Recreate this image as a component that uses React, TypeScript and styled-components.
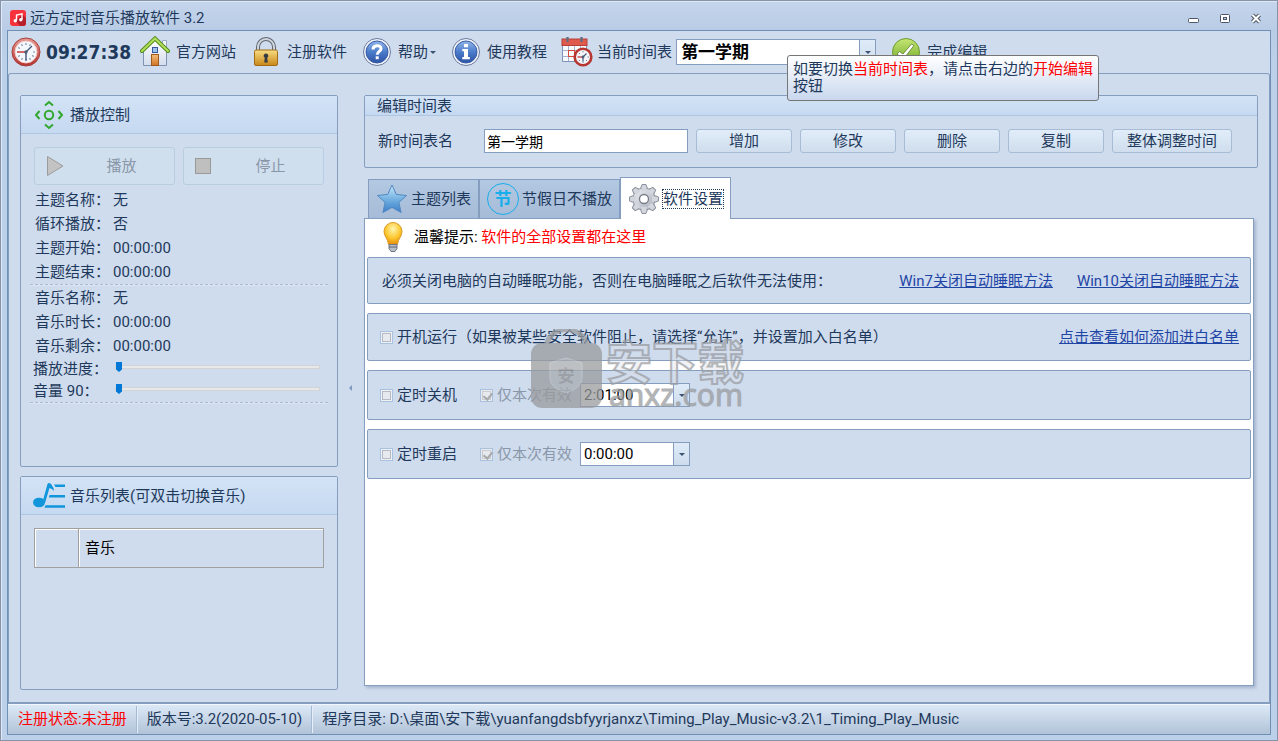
import React from "react";
import styled, { createGlobalStyle, css } from "styled-components";

const GlobalStyle = createGlobalStyle`
  * { box-sizing: border-box; }
  body {
    margin: 0;
    background: #bdd0e9;
    color: #1e395b;
    font: 15px/18px Roboto, "Noto Sans CJK SC", sans-serif;
  }
  button, input, select { font: inherit; color: inherit; margin: 0; padding: 0; border-radius: 0; }
`;

const line = "#859ebf";

/* ---------- window frame ---------- */

const Window = styled.div`
  min-height: 100vh;
  display: flex;
  flex-direction: column;
  padding: 1px 6px 5px;
  border: 1px solid #8793a8;
  background: linear-gradient(#c4d5ec, #b9cce5 30px, #bdd0ea 60px);
  box-shadow: inset 1px 1px 0 #dfe9f6;
`;

const TitleBar = styled.header`
  display: flex;
  align-items: center;
  gap: 4px;
  height: 28px;
  padding: 3px 8px 0 3px;
  white-space: nowrap;
`;

const Title = styled.h1`
  flex: 1;
  margin: 0;
  font-size: 15px;
  font-weight: 400;
`;

const WindowButtons = styled.div`
  display: flex;
  gap: 17px;
`;

const WindowButton = styled.button`
  display: flex;
  width: 14px;
  height: 14px;
  border: 0;
  background: none;
`;

const Body = styled.div`
  flex: 1;
  display: flex;
  flex-direction: column;
  border: 1px solid #6f8fb4;
  background: #cfdcee;
`;

/* ---------- tool bar ---------- */

const ToolBar = styled.nav`
  display: flex;
  align-items: center;
  gap: 14px;
  height: 42px;
  padding-left: 3px;
  white-space: nowrap;
`;

const Clock = styled.time`
  display: flex;
  align-items: center;
  gap: 5px;
  margin-right: -6px;
  font: bold 19px/24px "DejaVu Sans Condensed", "DejaVu Sans", sans-serif;
`;

const ToolButton = styled.button`
  display: flex;
  align-items: center;
  gap: 5px;
  border: 0;
  background: none;
`;

const ToolField = styled.div`
  display: flex;
  align-items: center;
  gap: 4px;
`;

const MenuWord = styled.span`
  display: flex;
  align-items: center;
  gap: 2px;
`;

const Caret = styled.span`
  flex: none;
  border: 3px solid transparent;
  border-top: 3px solid #3d5273;
  border-bottom: 0;
`;

const Combo = styled.div<{ $width: number; $height: number }>`
  display: flex;
  width: ${(p) => p.$width}px;
  height: ${(p) => p.$height}px;
  border: 1px solid ${line};
  background: #fff;
`;

const ComboSelect = styled.select`
  flex: 1;
  min-width: 0;
  padding-left: 4px;
  border: 0;
  outline: 0;
  appearance: none;
  background: none;
  color: #000;
  font-size: 17px;
  font-weight: 700;
`;

const ComboInput = styled.input`
  flex: 1;
  min-width: 0;
  padding-left: 3px;
  border: 0;
  outline: 0;
  background: none;
  color: #000;
`;

const ComboButton = styled.button`
  display: flex;
  align-items: center;
  justify-content: center;
  width: 16px;
  border: 0;
  border-left: 1px solid ${line};
  background: linear-gradient(#dfebf8, #cddcec);
`;

/* ---------- client area ---------- */

const Client = styled.main`
  flex: 1;
  display: flex;
  padding: 21px 11px 12px 11px;
  border: 1px solid ${line};
  border-bottom-width: 2px;
  border-radius: 3px 3px 0 0;
`;

const SideColumn = styled.div`
  flex: none;
  display: flex;
  flex-direction: column;
  gap: 9px;
  width: 318px;
`;

const MainColumn = styled.div`
  flex: 1;
  min-width: 0;
  display: flex;
  flex-direction: column;
`;

const Splitter = styled.div`
  flex: none;
  display: flex;
  align-items: center;
  justify-content: center;
  width: 26px;
  padding: 0 2px 10px 0;
`;

const SplitterArrow = styled.span`
  border: 3px solid transparent;
  border-right: 3px solid #7f98bd;
  border-left: 0;
`;

const Group = styled.section<{ $grow?: boolean }>`
  ${(p) => p.$grow && css`flex: 1;`}
  border: 1px solid ${line};
  border-radius: 2px;
`;

const GroupHead = styled.h2<{ $tall?: boolean }>`
  display: flex;
  align-items: center;
  gap: 5px;
  height: ${(p) => (p.$tall ? 38 : 20)}px;
  margin: 0;
  padding-left: 12px;
  border-bottom: 1px solid #aec6e1;
  background: linear-gradient(#d3e3f6, #c5d9f1);
  font-size: 15px;
  font-weight: 400;
`;

const PlayerBody = styled.div`
  padding: 13px 9px 62px;
`;

const PlayerButtons = styled.div`
  display: flex;
  gap: 8px;
  padding: 0 4px 3px;
`;

const PlayerButton = styled.button`
  flex: 1;
  display: flex;
  align-items: center;
  height: 38px;
  padding: 0 17px 0 9px;
  border: 1px solid #b9cde0;
  border-radius: 3px;
  background: #d0dfee;
  color: #8a97a8;
`;

const PlayerButtonText = styled.span`
  flex: 1;
  padding-left: 18px;
`;

const Facts = styled.dl`
  margin: 0;
  padding-left: 5px;
`;

const Fact = styled.div`
  display: flex;
  height: 24px;
  line-height: 24px;
`;

const FactName = styled.dt`
  width: 78px;
`;

const FactValue = styled.dd`
  margin: 0;
`;

const Rule = styled.hr`
  height: 2px;
  margin: 0;
  border: 0;
  border-top: 1px dashed #a9bad2;
  background: #dbe5f2;
`;

const SliderRow = styled.div`
  display: flex;
  align-items: flex-start;
  height: 22px;
  padding: 0 8px 0 3px;
  line-height: 22px;
`;

const SliderLabel = styled.label`
  width: 82px;
`;

const Slider = styled.input`
  flex: 1;
  min-width: 0;
  height: 12px;
  margin-top: 3px;
  appearance: none;
  background: none;

  &::-webkit-slider-runnable-track {
    height: 4px;
    border: 1px solid #d3d3d5;
    background: #e7e9ea;
  }
  &::-webkit-slider-thumb {
    appearance: none;
    width: 6px;
    height: 10px;
    margin-top: -4px;
    background: #0078d7;
    clip-path: polygon(0 0, 100% 0, 100% 75%, 50% 100%, 0 75%);
  }
`;

const MusicTable = styled.table`
  width: calc(100% - 26px);
  margin: 13px;
  border: 1px solid #a0a0a0;
  border-spacing: 0;
  table-layout: fixed;
`;

const MusicHead = styled.th<{ $width?: number }>`
  width: ${(p) => (p.$width ? `${p.$width}px` : "auto")};
  height: 38px;
  padding: 0 6px;
  box-shadow: inset 1px 1px 0 #fff;
  color: #000;
  font-weight: 400;
  text-align: left;
  & + & { border-left: 1px solid #a0a0a0; }
`;

/* ---------- schedule editor ---------- */

const EditorRow = styled.form`
  display: flex;
  align-items: center;
  gap: 8px;
  padding: 13px 13px 14px;
`;

const EditorLabel = styled.label`
  width: 98px;
`;

const NameInput = styled.input`
  width: 204px;
  height: 24px;
  padding-left: 2px;
  border: 1px solid ${line};
  outline: 0;
  background: #fff;
  color: #000;
  font-size: 14px;
`;

const Button = styled.button<{ $wide?: boolean }>`
  width: ${(p) => (p.$wide ? 120 : 96)}px;
  height: 24px;
  border: 1px solid #a9bcd6;
  border-radius: 3px;
  background: linear-gradient(#e1edf9, #cfdded);
`;

/* ---------- tabs ---------- */

const Tabs = styled.div`
  position: relative;
  z-index: 1;
  display: flex;
  align-items: flex-end;
  margin: 9px 0 -1px;
  padding-left: 4px;
`;

const Tab = styled.button<{ $active?: boolean }>`
  display: flex;
  align-items: center;
  gap: 3px;
  height: 40px;
  padding: 0 7px;
  border: 1px solid ${line};
  background: linear-gradient(#b3c8e1, #a5bbd7);
  ${(p) =>
    p.$active &&
    css`
      height: 42px;
      border-bottom: 0;
      background: #fff;
    `}
`;

const TabText = styled.span<{ $focus?: boolean }>`
  ${(p) => p.$focus && css`outline: 1px dotted #1e395b;`}
`;

const TabPage = styled.div`
  position: relative;
  flex: 1;
  margin: 0 4px 4px 0;
  padding: 0 2px;
  border: 1px solid ${line};
  background: #fff;
  box-shadow: 2px 2px 3px rgba(90, 110, 145, 0.35);
`;

const Tip = styled.p`
  display: flex;
  align-items: center;
  gap: 5px;
  height: 38px;
  margin: 0;
  padding: 0 0 2px 10px;
  color: #000;
`;

const Red = styled.span`
  color: #f00;
`;

const Settings = styled.div`
  display: flex;
  flex-direction: column;
  gap: 9px;
`;

const Setting = styled.div<{ $height?: number; $indent?: number }>`
  display: flex;
  align-items: center;
  height: ${(p) => p.$height ?? 50}px;
  padding: 0 11px 0 ${(p) => p.$indent ?? 12}px;
  border: 1px solid ${line};
  border-radius: 2px;
  background: #cfdcee;
`;

const Links = styled.div`
  display: flex;
  gap: 24px;
  margin-left: auto;
`;

const Link = styled.a`
  color: #1f45a5;
`;

const Check = styled.label<{ $dim?: boolean }>`
  display: flex;
  align-items: center;
  gap: 4px;
  margin-right: ${(p) => (p.$dim ? 8 : 23)}px;
  color: ${(p) => (p.$dim ? "#8a97a8" : "inherit")};
`;

const CheckBox = styled.input.attrs({ type: "checkbox" })`
  width: 13px;
  height: 13px;
  appearance: none;
  border: 1px solid #a9c0de;
  background: #e6e9ed;
  box-shadow: inset 0 0 0 1px #f0f1f2, inset 0 0 0 2px #b4bac3;

  &:checked {
    box-shadow: inset 0 0 0 1px #e8eaec, inset 0 0 0 2px #c9cdd2;
  }
  &:checked::after {
    content: "";
    display: block;
    width: 4px;
    height: 7px;
    margin: 1px 0 0 4px;
    border: solid #a7a9ab;
    border-width: 0 2px 2px 0;
    transform: rotate(40deg);
  }
`;

/* ---------- status bar ---------- */

const StatusBar = styled.footer`
  display: flex;
  align-items: center;
  height: 30px;
  border-top: 1px solid #f2f7fd;
  background: linear-gradient(#dce8f6, #b1c3d8);
  white-space: nowrap;
`;

const StatusItem = styled.span<{ $alert?: boolean }>`
  padding: 0 9px 0 10px;
  line-height: 27px;
  color: ${(p) => (p.$alert ? "#f00" : "inherit")};
  & + & {
    border-left: 1px solid #a4b9d2;
    box-shadow: inset 1px 0 0 #e5eef9;
  }
`;

/* ---------- overlays ---------- */

const Tooltip = styled.div`
  position: absolute;
  z-index: 5;
  top: 55px;
  left: 787px;
  width: 312px;
  padding: 5px 0 5px 5px;
  border: 1px solid #767676;
  border-radius: 3px;
  background: linear-gradient(#fff, #c9d7ee);
  line-height: 17px;
`;

const Watermark = styled.div`
  position: absolute;
  z-index: 4;
  top: 110px;
  left: 166px;
  display: flex;
  gap: 4px;
  color: #999b9e;
  opacity: 0.75;
  pointer-events: none;
`;

const MarkWords = styled.div`
  display: flex;
  flex-direction: column;
  padding-top: 5px;
`;

const MarkName = styled.span`
  font: 700 46px/50px "Noto Sans CJK SC", sans-serif;
  color: rgba(215, 222, 232, 0.5);
  -webkit-text-stroke: 2px #9b9ea3;
`;

const MarkSite = styled.span`
  padding-left: 3px;
  margin-top: -7px;
  font: 400 30px/36px "Noto Sans", sans-serif;
  -webkit-text-stroke: 1px currentColor;
`;

/* ---------- icons ---------- */

const AppIcon = () => (
  <svg width="16" height="16" viewBox="0 0 16 16">
    <rect width="16" height="16" rx="3" fill="#f8323c" />
    <path d="M6 11l4 5h3a3 3 0 0 0 3-3V8l-4-4z" fill="#b81f2a" />
    <path d="M6.500 10.500V5l5.500-1.200v5.700" fill="none" stroke="#fff" strokeWidth="1.400" />
    <circle cx="5.300" cy="10.800" r="1.700" fill="#fff" />
    <circle cx="10.800" cy="9.700" r="1.700" fill="#fff" />
  </svg>
);

const ClockIcon = () => (
  <svg width="30" height="32" viewBox="0 0 30 32">
    <defs>
      <linearGradient id="rim" x1="0" y1="0" x2="0" y2="1">
        <stop offset="0" stopColor="#e79a93" />
        <stop offset="1" stopColor="#b43230" />
      </linearGradient>
    </defs>
    <circle cx="15" cy="16" r="14" fill="url(#rim)" stroke="#a8403e" />
    <circle cx="15" cy="16" r="11" fill="#f4f7fb" stroke="#f3c9c4" />
    <g stroke="#7d8ea8" strokeWidth="1.200">
      <path d="M15 7v2M15 23v2M24 16h-2M19.500 8.200l-1 1.700M10.500 8.200l1 1.700M22.800 20.500l-1.700-1M7.200 20.500l1.700-1M10.500 23.800l1-1.700M19.500 23.800l-1-1.700M7.200 11.500l1.700 1" />
    </g>
    <path d="M21 10l-6 6v8.500" fill="none" stroke="#44587a" strokeWidth="1.400" />
    <path d="M6 16h9" stroke="#c22d2a" strokeWidth="1.400" />
    <circle cx="15" cy="16" r="1.700" fill="#4b5c79" />
  </svg>
);

const HouseIcon = () => (
  <svg width="32" height="32" viewBox="0 0 32 32">
    <defs>
      <linearGradient id="wall" x1="0" y1="0" x2="0" y2="1">
        <stop offset="0" stopColor="#fff" />
        <stop offset="1" stopColor="#d3dded" />
      </linearGradient>
      <linearGradient id="door" x1="0" y1="0" x2="0" y2="1">
        <stop offset="0" stopColor="#f5bd7c" />
        <stop offset="1" stopColor="#cf7423" />
      </linearGradient>
    </defs>
    <path d="M23.500 4.500h4V14l-4-4z" fill="#f4f6fa" stroke="#9aa9c4" />
    <path d="M4.500 15L16 4l11.500 11v14.500h-23z" fill="url(#wall)" stroke="#7f92b4" />
    <rect x="13.500" y="11.500" width="5" height="5" fill="#9cc4ee" stroke="#385a9c" />
    <rect x="12.500" y="18.500" width="7" height="11" fill="url(#door)" stroke="#a25a1c" />
    <path d="M3 15L16 2.500 29 15" fill="none" stroke="#568a1c" strokeWidth="4" strokeLinecap="round" />
    <path d="M3 15L16 2.500 29 15" fill="none" stroke="#b0df5c" strokeWidth="2" strokeLinecap="round" />
  </svg>
);

const LockIcon = () => (
  <svg width="32" height="32" viewBox="0 0 32 32">
    <defs>
      <linearGradient id="brass" x1="0" y1="0" x2="0" y2="1">
        <stop offset="0" stopColor="#f9dd83" />
        <stop offset="1" stopColor="#c98718" />
      </linearGradient>
    </defs>
    <path d="M8 15v-4a8 8 0 0 1 16 0v4" fill="none" stroke="#5e6672" strokeWidth="4" />
    <path d="M8 15v-4a8 8 0 0 1 16 0v4" fill="none" stroke="#cfd5dc" strokeWidth="2" />
    <rect x="4.500" y="14" width="23" height="15.500" rx="1.500" fill="url(#brass)" stroke="#a26c16" />
    <path d="M16 17.500a2.300 2.300 0 0 1 1.200 4.300l.6 4.700h-3.600l.6-4.700a2.300 2.300 0 0 1 1.200-4.300z" fill="#363c46" />
  </svg>
);

const BallIcon = ({ kind }: { kind: "help" | "info" }) => (
  <svg width="32" height="32" viewBox="0 0 32 32">
    <defs>
      <linearGradient id="ball" x1="0" y1="0" x2="0" y2="1">
        <stop offset="0" stopColor="#92b5e8" />
        <stop offset="0.5" stopColor="#4b7ccb" />
        <stop offset="1" stopColor="#2c52a4" />
      </linearGradient>
    </defs>
    <circle cx="16" cy="16" r="13.500" fill="#f1f5fb" stroke="#68799d" />
    <circle cx="16" cy="16" r="11" fill="url(#ball)" stroke="#3b5da5" />
    {kind === "help" ? (
      <g fill="none" stroke="#fff" strokeWidth="3">
        <path d="M12 13.500c0-5 8-5 8-.8 0 2.600-3.800 2.800-3.800 6" />
        <path d="M16.200 20.300v2.900" />
      </g>
    ) : (
      <path d="M14 8h4v3.200h-4zM12.300 13H18v8h1.800v2.300h-7.500V21H14v-5.700h-1.700z" fill="#fff" />
    )}
  </svg>
);

const CalendarIcon = () => (
  <svg width="32" height="32" viewBox="0 0 32 32">
    <path d="M1.500 3.500h24v22h-24z" fill="#f7f9fd" stroke="#7f91b7" />
    <path d="M1.500 14.500h24M1.500 20.500h24M7.500 9v16M13.500 9v16M19.500 9v16" stroke="#a5b3cf" />
    <rect x="1" y="3" width="25" height="6.500" fill="#df5a4c" stroke="#b74139" />
    <rect x="7.500" y="14.500" width="6" height="6" fill="none" stroke="#d6493d" />
    <path d="M6.500 1v5M20.500 1v5" stroke="#646e82" strokeWidth="2.400" />
    <circle cx="22" cy="21" r="8.300" fill="#f4f6fa" stroke="#b83631" strokeWidth="2.600" />
    <g stroke="#7d8ea8">
      <path d="M22 15v1.500M22 25.500V27M28 21h-1.500M18 17l1 1M18 25l1-1M26 25l-1-1" />
    </g>
    <path d="M25.500 17.500L22 21v4.500" fill="none" stroke="#4a5c7c" strokeWidth="1.200" />
    <path d="M16.500 21H22" stroke="#c22d2a" strokeWidth="1.200" />
    <circle cx="22" cy="21" r="1.400" fill="#4a5c7c" />
  </svg>
);

const DoneIcon = () => (
  <svg width="32" height="32" viewBox="0 0 32 32">
    <defs>
      <linearGradient id="leaf" x1="0" y1="0" x2="0" y2="1">
        <stop offset="0" stopColor="#c6e675" />
        <stop offset="1" stopColor="#6ba522" />
      </linearGradient>
    </defs>
    <circle cx="16" cy="16" r="13.500" fill="url(#leaf)" stroke="#6e9c31" />
    <path d="M7 18l2.500-2.500 3.500 2.500L21.500 8l2.500 1.500L13.500 23z" fill="#fff" stroke="#567f25" strokeWidth=".8" />
  </svg>
);

const ControlIcon = () => (
  <svg width="32" height="32" viewBox="0 0 32 32" fill="none" stroke="#31a82e" strokeWidth="2">
    <circle cx="16" cy="16" r="4.200" />
    <path d="M12 6.500L16 3l4 3.500M12 25.500l4 3.500 4-3.500M6.500 12L3 16l3.500 4M25.500 12l3.500 4-3.500 4" />
  </svg>
);

const MusicListIcon = () => (
  <svg width="32" height="32" viewBox="0 0 32 32" fill="#1296db">
    <ellipse cx="6" cy="22.500" rx="6" ry="4.800" />
    <path d="M9.500 22l5-18c1-2 3-1 4 .5 1 2.500 3 3.500 2 6.500-1-2-2.500-2.500-4-3L12 23z" />
    <path d="M21 4.500h11v2.400H22.500zM16.500 15h15.500v2.400H15.800zM12.500 25.300H32v2.400H11.500z" />
  </svg>
);

const PlayIcon = () => (
  <svg width="24" height="24" viewBox="0 0 24 24">
    <path d="M3.500 2.500L19 12 3.500 21.500z" fill="#c3c3c3" stroke="#9c9c9c" />
  </svg>
);

const StopIcon = () => (
  <svg width="24" height="24" viewBox="0 0 24 24">
    <rect x="2.500" y="4.500" width="15" height="15" fill="#bfbfbf" stroke="#999" />
  </svg>
);

const StarIcon = () => (
  <svg width="32" height="32" viewBox="0 0 32 32">
    <defs>
      <linearGradient id="sky" x1="0" y1="0" x2="0" y2="1">
        <stop offset="0" stopColor="#c4e8fc" />
        <stop offset="0.6" stopColor="#68a8de" />
        <stop offset="1" stopColor="#3b7ec8" />
      </linearGradient>
    </defs>
    <path
      d="M16 2l4.300 9.400 10.200 1.100-7.600 6.900 2.200 10.100-9.100-5.100-9.100 5.100 2.200-10.100-7.600-6.900 10.200-1.100z"
      fill="url(#sky)"
      stroke="#5288c0"
      strokeLinejoin="round"
    />
  </svg>
);

const HolidayBadge = styled.span`
  display: flex;
  align-items: center;
  justify-content: center;
  width: 32px;
  height: 32px;
  border: 1px solid #18aeea;
  border-radius: 50%;
  color: #18aeea;
  font-size: 17px;
  font-weight: 700;
`;

const teeth = Array.from({ length: 8 }, (_, i) => i * 45);

const GearIcon = () => (
  <svg width="32" height="32" viewBox="0 0 32 32">
    <defs>
      <linearGradient id="steel" x1="0" y1="0" x2="1" y2="1">
        <stop offset="0" stopColor="#f0f2f5" />
        <stop offset="1" stopColor="#a5abb7" />
      </linearGradient>
    </defs>
    <g fill="#cdd1d8" stroke="#8b919d" strokeLinejoin="round">
      {teeth.map((a) => (
        <path key={a} d="M12 7l2-5.500h4L20 7z" transform={`rotate(${a} 16 16)`} />
      ))}
    </g>
    <circle cx="16" cy="16" r="11" fill="url(#steel)" stroke="#9298a4" />
    <g fill="#d3d6dd">
      {teeth.map((a) => (
        <path key={a} d="M12.800 8l1.700-5.500h3L19.200 8z" transform={`rotate(${a} 16 16)`} />
      ))}
    </g>
    <circle cx="16" cy="16" r="4.500" fill="#fff" stroke="#777c88" strokeWidth="1.300" />
  </svg>
);

const BulbIcon = () => (
  <svg width="32" height="32" viewBox="0 0 32 32">
    <defs>
      <radialGradient id="glow" cx=".5" cy=".3" r=".7">
        <stop offset="0" stopColor="#fff6b0" />
        <stop offset="0.6" stopColor="#fbc62c" />
        <stop offset="1" stopColor="#e58d0c" />
      </radialGradient>
    </defs>
    <path d="M16 1.500a9 9 0 0 1 9 9c0 5-4 7-4.500 13h-9C11 17.500 7 15.500 7 10.500a9 9 0 0 1 9-9z" fill="url(#glow)" stroke="#dc9a26" />
    <path d="M12 23.500h8v4l-2 3h-4l-2-3z" fill="#b9bfc9" stroke="#6e7583" />
    <path d="M12 26h8" stroke="#5c6370" />
  </svg>
);

const MarkIcon = () => (
  <svg width="71" height="80" viewBox="0 0 71 80">
    <path d="M15 17C19-5 52-5 56 17" fill="none" stroke="currentColor" strokeWidth="5" />
    <rect y="14" width="71" height="65" rx="11" fill="currentColor" />
    <path d="M35 29l16 5v15c0 8-8 12-16 15-8-3-16-7-16-15V34z" fill="#a8abaf" stroke="#b9bdc2" />
    <text x="35" y="53" textAnchor="middle" fontSize="17" fontWeight="700" fill="#8b8e92">安</text>
  </svg>
);

/* ---------- data ---------- */

const topic = [
  ["主题名称：", "无"],
  ["循环播放：", "否"],
  ["主题开始：", "00:00:00"],
  ["主题结束：", "00:00:00"],
];

const music = [
  ["音乐名称：", "无"],
  ["音乐时长：", "00:00:00"],
  ["音乐剩余：", "00:00:00"],
];

const FactList = ({ items }: { items: string[][] }) => (
  <Facts>
    {items.map(([name, value]) => (
      <Fact key={name}>
        <FactName>{name}</FactName>
        <FactValue>{value}</FactValue>
      </Fact>
    ))}
  </Facts>
);

const TimedAction = ({ name, time }: { name: string; time: string }) => (
  <Setting>
    <Check>
      <CheckBox />
      {name}
    </Check>
    <Check $dim>
      <CheckBox defaultChecked disabled />
      仅本次有效
    </Check>
    <Combo $width={110} $height={24}>
      <ComboInput aria-label={`${name}时间`} defaultValue={time} />
      <ComboButton type="button" aria-label="选择时间">
        <Caret />
      </ComboButton>
    </Combo>
  </Setting>
);

export default function App() {
  return (
    <>
      <GlobalStyle />
      <Window>
        <TitleBar>
          <AppIcon />
          <Title>远方定时音乐播放软件 3.2</Title>
          <WindowButtons>
            <WindowButton aria-label="最小化">
              <svg width="14" height="14" viewBox="0 0 14 14">
                <rect x="1.500" y="7.500" width="10" height="4" rx="1" fill="#fff" stroke="#4d5666" />
              </svg>
            </WindowButton>
            <WindowButton aria-label="最大化">
              <svg width="14" height="14" viewBox="0 0 14 14">
                <rect x="2.500" y="3.500" width="9" height="8" rx="1" fill="#fff" stroke="#4d5666" />
                <rect x="5.500" y="6.500" width="3" height="2" fill="#c3d3e8" stroke="#4d5666" />
              </svg>
            </WindowButton>
            <WindowButton aria-label="关闭">
              <svg width="14" height="14" viewBox="0 0 14 14">
                <path d="M3.500 4l7 7M10.500 4l-7 7" stroke="#4d5666" strokeWidth="4" />
                <path d="M3.500 4l7 7M10.500 4l-7 7" stroke="#fff" strokeWidth="2" />
              </svg>
            </WindowButton>
          </WindowButtons>
        </TitleBar>

        <Body>
          <ToolBar>
            <Clock>
              <ClockIcon />
              09:27:38
            </Clock>
            <ToolButton>
              <HouseIcon />
              官方网站
            </ToolButton>
            <ToolButton>
              <LockIcon />
              注册软件
            </ToolButton>
            <ToolButton>
              <BallIcon kind="help" />
              <MenuWord>
                帮助
                <Caret />
              </MenuWord>
            </ToolButton>
            <ToolButton>
              <BallIcon kind="info" />
              使用教程
            </ToolButton>
            <ToolField>
              <CalendarIcon />
              <label htmlFor="schedule">当前时间表</label>
              <Combo $width={200} $height={26}>
                <ComboSelect id="schedule">
                  <option>第一学期</option>
                </ComboSelect>
                <ComboButton as="span" aria-hidden>
                  <Caret />
                </ComboButton>
              </Combo>
            </ToolField>
            <ToolButton>
              <DoneIcon />
              完成编辑
            </ToolButton>
          </ToolBar>

          <Client>
            <SideColumn>
              <Group>
                <GroupHead $tall>
                  <ControlIcon />
                  播放控制
                </GroupHead>
                <PlayerBody>
                  <PlayerButtons>
                    <PlayerButton disabled>
                      <PlayIcon />
                      <PlayerButtonText>播放</PlayerButtonText>
                    </PlayerButton>
                    <PlayerButton disabled>
                      <StopIcon />
                      <PlayerButtonText>停止</PlayerButtonText>
                    </PlayerButton>
                  </PlayerButtons>
                  <FactList items={topic} />
                  <Rule />
                  <FactList items={music} />
                  <SliderRow>
                    <SliderLabel htmlFor="progress">播放进度：</SliderLabel>
                    <Slider id="progress" type="range" defaultValue={0} />
                  </SliderRow>
                  <SliderRow>
                    <SliderLabel htmlFor="volume">音量 90：</SliderLabel>
                    <Slider id="volume" type="range" defaultValue={0} />
                  </SliderRow>
                  <Rule />
                </PlayerBody>
              </Group>

              <Group $grow>
                <GroupHead $tall>
                  <MusicListIcon />
                  音乐列表(可双击切换音乐)
                </GroupHead>
                <MusicTable>
                  <thead>
                    <tr>
                      <MusicHead $width={43} />
                      <MusicHead>音乐</MusicHead>
                    </tr>
                  </thead>
                </MusicTable>
              </Group>
            </SideColumn>

            <Splitter>
              <SplitterArrow />
            </Splitter>

            <MainColumn>
              <Group>
                <GroupHead>编辑时间表</GroupHead>
                <EditorRow onSubmit={(e) => e.preventDefault()}>
                  <EditorLabel htmlFor="name">新时间表名</EditorLabel>
                  <NameInput id="name" defaultValue="第一学期" />
                  <Button>增加</Button>
                  <Button>修改</Button>
                  <Button>删除</Button>
                  <Button>复制</Button>
                  <Button $wide>整体调整时间</Button>
                </EditorRow>
              </Group>

              <Tabs role="tablist">
                <Tab role="tab">
                  <StarIcon />
                  <TabText>主题列表</TabText>
                </Tab>
                <Tab role="tab">
                  <HolidayBadge>节</HolidayBadge>
                  <TabText>节假日不播放</TabText>
                </Tab>
                <Tab role="tab" $active aria-selected>
                  <GearIcon />
                  <TabText $focus>软件设置</TabText>
                </Tab>
              </Tabs>

              <TabPage role="tabpanel">
                <Tip>
                  <BulbIcon />
                  <span>
                    温馨提示: <Red>软件的全部设置都在这里</Red>
                  </span>
                </Tip>
                <Settings>
                  <Setting $height={47} $indent={14}>
                    必须关闭电脑的自动睡眠功能，否则在电脑睡眠之后软件无法使用：
                    <Links>
                      <Link href="#win7">Win7关闭自动睡眠方法</Link>
                      <Link href="#win10">Win10关闭自动睡眠方法</Link>
                    </Links>
                  </Setting>
                  <Setting $height={48}>
                    <Check>
                      <CheckBox />
                      开机运行（如果被某些安全软件阻止，请选择“允许”，并设置加入白名单）
                    </Check>
                    <Links>
                      <Link href="#whitelist">点击查看如何添加进白名单</Link>
                    </Links>
                  </Setting>
                  <TimedAction name="定时关机" time="2:01:00" />
                  <TimedAction name="定时重启" time="0:00:00" />
                </Settings>
                <Watermark>
                  <MarkIcon />
                  <MarkWords>
                    <MarkName>安下载</MarkName>
                    <MarkSite>anxz.com</MarkSite>
                  </MarkWords>
                </Watermark>
              </TabPage>
            </MainColumn>
          </Client>

          <StatusBar>
            <StatusItem $alert>注册状态:未注册</StatusItem>
            <StatusItem>版本号:3.2(2020-05-10)</StatusItem>
            <StatusItem>
              程序目录: D:\桌面\安下载\yuanfangdsbfyyrjanxz\Timing_Play_Music-v3.2\1_Timing_Play_Music
            </StatusItem>
          </StatusBar>
        </Body>
      </Window>
      <Tooltip role="tooltip">
        如要切换<Red>当前时间表</Red>，请点击右边的<Red>开始编辑</Red>按钮
      </Tooltip>
    </>
  );
}
